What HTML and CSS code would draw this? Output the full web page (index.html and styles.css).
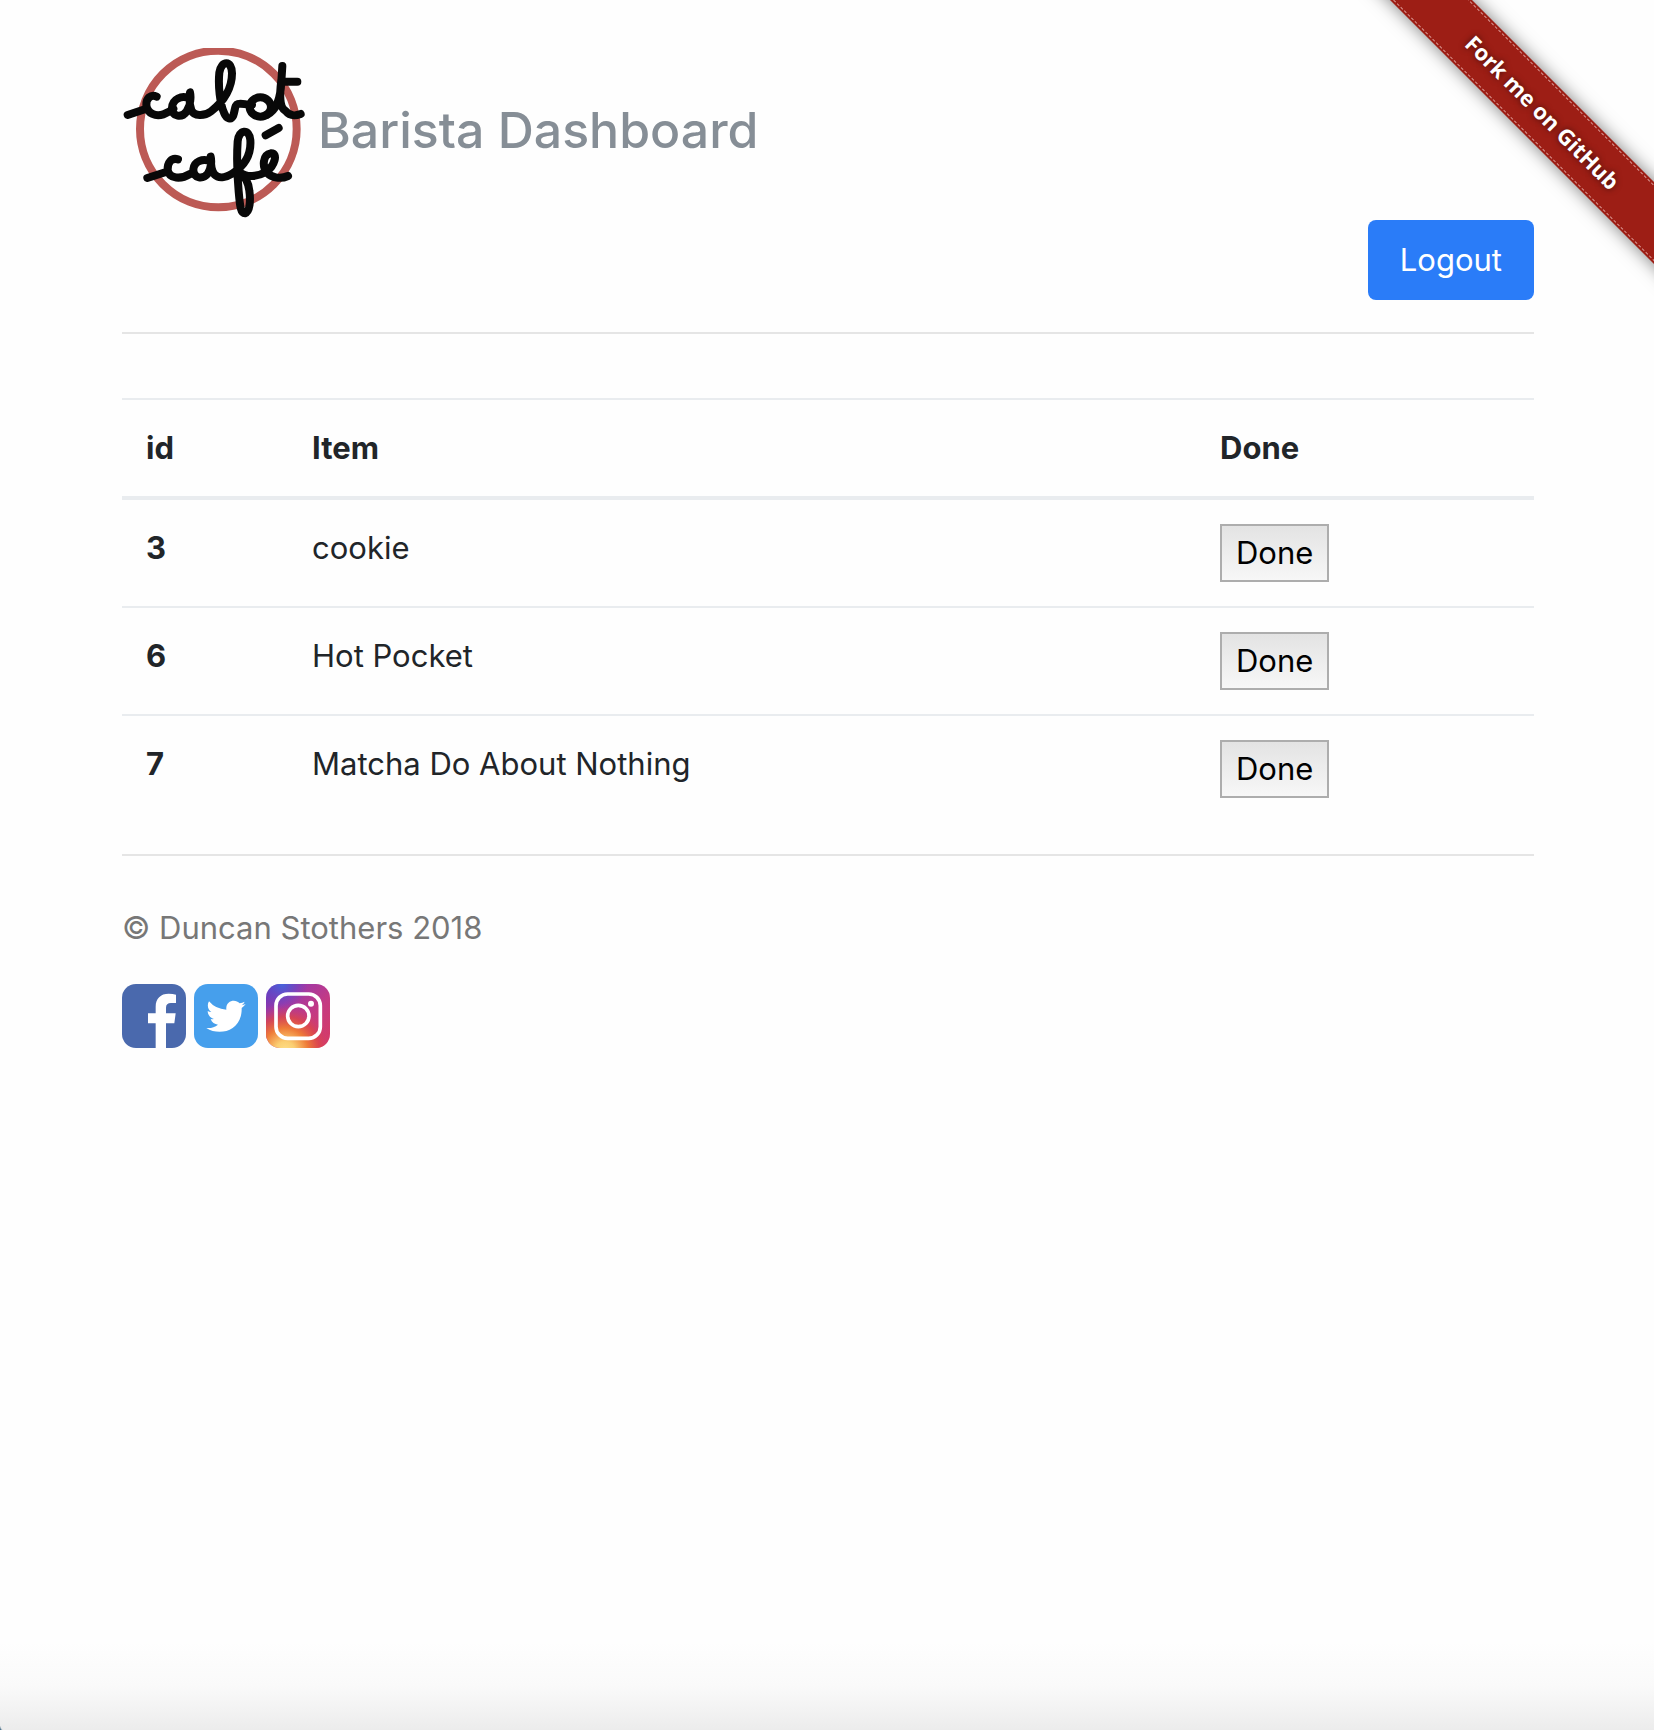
FILE: index.html
```html
<!DOCTYPE html>
<html lang="en">
<head>
  <meta charset="utf-8">
  <meta name="viewport" content="width=device-width, initial-scale=1">
  <title>Barista Dashboard</title>
  <link rel="stylesheet" href="styles.css">
</head>
<body>
  <div class="ribbon-corner">
    <a class="ribbon" href="#github"><span class="ribbon-text">Fork me on GitHub</span></a>
  </div>
  <div class="container">
    <header class="header">
      <div class="brand">
        <svg class="logo" viewBox="36 54 552 516" role="img" aria-label="Cabot Café logo">
          <circle class="logo-ring" cx="325" cy="297" r="235"/>
          <g class="logo-script">
            <path d="M53 255L100 239M140 200C122 192 108 205 109 226C112 252 138 260 160 253Q178 247 190 236"/>
            <path d="M240 206C215 194 187 207 186 234C186 262 216 264 230 244C242 224 243 200 240 187C238 200 238 222 244 240C252 260 283 259 303 244C345 212 366 170 366 130C366 90 334 90 328 128C324 168 330 222 342 248C350 268 364 270 370 256C376 238 374 224 384 222C398 218 408 226 426 224"/>
            <ellipse cx="451" cy="231" rx="32" ry="29"/>
            <path d="M472 254C500 240 512 200 514 155L517 108M514 150C508 200 508 232 526 242C540 260 556 258 572 252M524 155H562"/>
            <path d="M112 444L168 426M204 388C184 382 172 398 173 420C178 448 214 448 240 432"/>
            <path d="M302 394C278 384 252 394 250 418C250 448 280 448 294 430C304 414 305 392 302 380C302 398 302 420 314 434C328 448 352 440 368 430C408 404 424 372 421 330C418 294 386 298 383 334C380 380 382 440 386 484C390 530 392 550 405 550C420 546 422 510 418 482C415 454 404 438 388 426C410 444 442 440 468 426C494 408 506 368 482 370C458 374 456 410 471 428C486 444 512 448 534 438"/>
            <path d="M467 316L506 294"/>
          </g>
        </svg>
        <h1 class="title">Barista Dashboard</h1>
      </div>
      <nav class="actions"><a class="logout" href="#logout">Logout</a></nav>
    </header>
    <main>
      <table class="orders">
        <thead>
          <tr><th class="col-id" scope="col">id</th><th scope="col">Item</th><th class="col-done" scope="col">Done</th></tr>
        </thead>
        <tbody>
          <tr><th scope="row">3</th><td>cookie</td><td><button class="done" type="button">Done</button></td></tr>
          <tr><th scope="row">6</th><td>Hot Pocket</td><td><button class="done" type="button">Done</button></td></tr>
          <tr><th scope="row">7</th><td>Matcha Do About Nothing</td><td><button class="done" type="button">Done</button></td></tr>
        </tbody>
      </table>
    </main>
    <footer class="footer">
      <p class="copyright">© Duncan Stothers 2018</p>
      <div class="social">
        <a href="#facebook" aria-label="Facebook">
          <svg class="social-icon" viewBox="0 0 192 192">
            <rect width="192" height="192" rx="42" fill="#4a69ad"/>
            <path fill="#fff" d="M101 192V118H78V88H101V68C101 43 116 29 140 29Q153 29 162 32V57H147Q132 57 132 71V88H161L157 118H132V192Z"/>
          </svg>
        </a>
        <a href="#twitter" aria-label="Twitter">
          <svg class="social-icon" viewBox="0 0 192 192">
            <rect width="192" height="192" rx="42" fill="#469fec"/>
            <path fill="#fff" d="M155 60Q149 63 143 64Q149 60 152 53Q145 57 137 58C124 43 94 50 97 77Q64 75 45 52C38 64 42 78 52 84Q46 84 41 81C41 93 49 102 60 105Q55 106 50 105C53 115 62 121 72 122Q57 134 37 132C77 158 145 141 143 72Q150 67 155 60Z"/>
          </svg>
        </a>
        <a href="#instagram" aria-label="Instagram">
          <svg class="social-icon" viewBox="0 0 192 192">
            <defs>
              <linearGradient id="ig-base" x1="0" y1="0" x2="1" y2="1"><stop offset="0" stop-color="#6338bd"/><stop offset=".3" stop-color="#a038a6"/><stop offset=".6" stop-color="#c43a83"/><stop offset="1" stop-color="#d93b60"/></linearGradient>
              <radialGradient id="ig-glow" cx=".3" cy="1.05" r=".75"><stop offset="0" stop-color="#ffe08a"/><stop offset=".2" stop-color="#fbcf72"/><stop offset=".48" stop-color="#ee7b38"/><stop offset=".72" stop-color="#dd4648" stop-opacity=".8"/><stop offset="1" stop-color="#c83a80" stop-opacity="0"/></radialGradient>
              <radialGradient id="ig-blue" cx=".25" cy="0" r=".4"><stop offset="0" stop-color="#4665dc"/><stop offset="1" stop-color="#5b45cc" stop-opacity="0"/></radialGradient>
            </defs>
            <rect width="192" height="192" rx="42" fill="url(#ig-base)"/>
            <rect width="192" height="192" rx="42" fill="url(#ig-glow)"/>
            <rect width="192" height="192" rx="42" fill="url(#ig-blue)"/>
            <g fill="none" stroke="#fff" stroke-width="11"><rect x="30" y="30" width="133" height="133" rx="35"/><circle cx="97" cy="96" r="32"/></g>
            <circle cx="135" cy="59" r="9" fill="#fff"/>
          </svg>
        </a>
      </div>
    </footer>
  </div>
</body>
</html>
```
FILE: styles.css
```css
* { box-sizing: border-box; }

body {
  position: relative;
  min-height: 100vh;
  margin: 0;
  padding: 48px 0;
  font: 400 31px/48px Inter, "Liberation Sans", sans-serif;
  color: #212529;
  background:
    radial-gradient(ellipse at 100% 0, transparent 70%, #0d4265 100%) left bottom / 4px 8px no-repeat,
    linear-gradient(#fefefe, #fafafa 50%, #ececec) left bottom / 100% 88px no-repeat,
    #fefefe;
}

.container {
  max-width: 1472px;
  margin: 0 auto;
  padding: 0 29px 0 31px;
}

.header {
  padding-bottom: 32px;
  border-bottom: 2px solid #e5e5e5;
}

.brand {
  display: flex;
  align-items: center;
  gap: 12px;
}

.logo {
  flex: none;
  width: 184px;
  height: 172px;
}

.logo-ring {
  fill: none;
  stroke: #bc5a55;
  stroke-width: 24;
}

.logo-script {
  fill: none;
  stroke: #080808;
  stroke-width: 24;
  stroke-linecap: round;
  stroke-linejoin: round;
}

.title {
  margin: 0 0 8px;
  font-size: 50px;
  font-weight: 500;
  line-height: 64px;
  color: #868e96;
}

.actions {
  display: flex;
  justify-content: flex-end;
}

.logout {
  padding: 16px 32px;
  border-radius: 8px;
  color: #fff;
  background: #2a7cf8;
  text-decoration: none;
}

.orders {
  width: 100%;
  margin: 64px 0 32px;
  border-collapse: separate;
  border-spacing: 0;
  table-layout: fixed;
}

.orders th,
.orders td {
  padding: 24px;
  border-top: 2px solid #e9ecef;
  text-align: left;
  vertical-align: top;
}

.orders thead th { border-bottom: 4px solid #e9ecef; }

.orders tbody tr:first-child > * { border-top: 0; }

.orders th { font-weight: 700; }

.col-id { width: 166px; }

.col-done { width: 338px; }

.done {
  display: block;
  height: 58px;
  padding: 0 14px;
  border: 2px solid #adadad;
  font: inherit;
  color: #000;
  background: linear-gradient(#e3e3e3, #f7f7f7);
}

.footer {
  padding-top: 48px;
  border-top: 2px solid #e5e5e5;
  color: #777;
}

.copyright { margin: 0 0 32px; }

.social {
  display: flex;
  gap: 8px;
}

.social-icon {
  display: block;
  width: 64px;
  height: 64px;
}

.ribbon-corner {
  position: absolute;
  top: 0;
  right: 0;
  width: 298px;
  height: 298px;
  overflow: hidden;
  pointer-events: none;
}

.ribbon {
  position: absolute;
  top: 83px;
  right: -119px;
  width: 460px;
  padding: 2px 0;
  background: #9d1e15;
  box-shadow: 0 0 18px rgba(0, 0, 0, .5);
  color: #fff;
  font: 700 22px/52px "Open Sans", sans-serif;
  text-align: center;
  text-decoration: none;
  text-shadow: 0 0 6px rgba(0, 0, 0, .6);
  transform: rotate(45deg);
  pointer-events: auto;
}

.ribbon-text {
  display: block;
  border: 1px dashed #d99490;
  border-width: 1px 0;
}
```
